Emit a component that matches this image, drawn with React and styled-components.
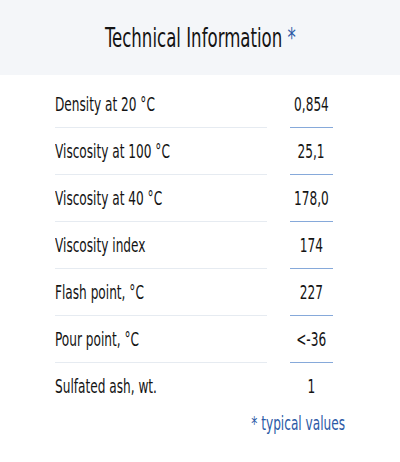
import React from 'react';
import styled, { createGlobalStyle } from 'styled-components';

const GlobalStyle = createGlobalStyle`
  body {
    margin: 0;
    background: #ffffff;
    font-family: 'DejaVu Sans Condensed', 'DejaVu Sans', sans-serif;
    color: #141414;
  }
`;

const Card = styled.div`
  width: 400px;
  height: 462px;
  background: #fff;
`;

const Header = styled.div`
  height: 75px;
  background: #f4f6f9;
  display: flex;
  align-items: center;
  justify-content: center;
`;

const Title = styled.h2`
  margin: 0;
  font-size: 26px;
  font-weight: 400;
  color: #141414;
  white-space: nowrap;
`;

// narrow DIN-like face: squeeze the condensed font sideways
const Squeeze = styled.span`
  display: inline-block;
  white-space: nowrap;
  transform: scaleX(0.71);
  transform-origin: ${(p) => p.$origin || 'left'} center;
`;

const Star = styled.span`
  color: #2b5aa6;
`;

const Table = styled.div`
  padding: 6px 0 0 55px;
`;

const Row = styled.div`
  display: grid;
  grid-template-columns: 212px 43px;
  column-gap: 23px;
  height: 47px;
`;

const Cell = styled.div`
  display: flex;
  align-items: center;
  justify-content: ${(p) => (p.$value ? 'center' : 'flex-start')};
  font-size: 19px;
  border-bottom: 1px solid ${(p) => (p.$last ? 'transparent' : p.$value ? '#86a9da' : '#e6ebf1')};
  padding-bottom: 1px;
`;

const Note = styled.div`
  width: 345px;
  display: flex;
  justify-content: flex-end;
  font-size: 19px;
  color: #2b5aa6;
  margin-top: 2px;
`;

const rows = [
  ['Density at 20 °C', '0,854'],
  ['Viscosity at 100 °C', '25,1'],
  ['Viscosity at 40 °C', '178,0'],
  ['Viscosity index', '174'],
  ['Flash point, °C', '227'],
  ['Pour point, °C', '<-36'],
  ['Sulfated ash, wt.', '1'],
];

export default function App() {
  return (
    <Card>
      <GlobalStyle />
      <Header>
        <Title>
          <Squeeze $origin="center">
            Technical Information <Star>*</Star>
          </Squeeze>
        </Title>
      </Header>
      <Table>
        {rows.map(([label, value], i) => {
          const last = i === rows.length - 1;
          return (
            <Row key={label}>
              <Cell $last={last}>
                <Squeeze>{label}</Squeeze>
              </Cell>
              <Cell $value $last={last}>
                <Squeeze $origin="center">{value}</Squeeze>
              </Cell>
            </Row>
          );
        })}
      </Table>
      <Note>
        <Squeeze $origin="right">* typical values</Squeeze>
      </Note>
    </Card>
  );
}
